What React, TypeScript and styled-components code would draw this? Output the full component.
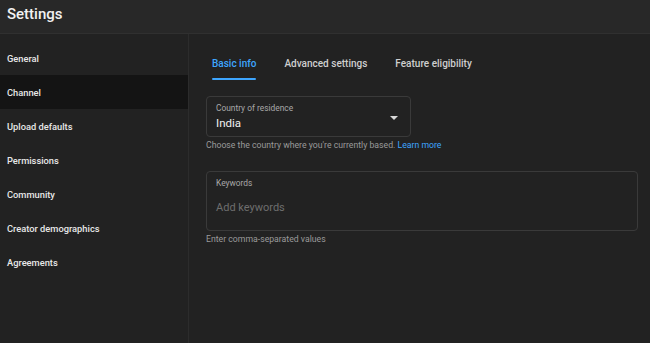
import styled, { createGlobalStyle } from "styled-components";

const GlobalStyle = createGlobalStyle`
  html, body {
    margin: 0;
    padding: 0;
    background: #222222;
  }
  body {
    font-family: Roboto, "Noto Sans", Arial, sans-serif;
    -webkit-font-smoothing: antialiased;
  }
`;

const Page = styled.div`
  width: 650px;
  height: 343px;
  display: flex;
  flex-direction: column;
  background: #222222;
  color: #f1f1f1;
  overflow: hidden;
  box-sizing: border-box;
`;

const Header = styled.div`
  height: 34px;
  flex-shrink: 0;
  display: flex;
  align-items: center;
  padding: 0 7px 6px;
  background: #282828;
  border-bottom: 1px solid #303030;
  font-size: 15px;
  font-weight: 500;
  color: #f1f1f1;
  box-sizing: border-box;
`;

const Body = styled.div`
  flex: 1;
  display: flex;
`;

const Sidebar = styled.nav`
  width: 189px;
  flex-shrink: 0;
  padding-top: 7px;
  border-right: 1px solid #2c2c2c;
  box-sizing: border-box;
`;

const NavItem = styled.div<{ $active?: boolean }>`
  height: 34px;
  display: flex;
  align-items: center;
  padding: 0 7px;
  font-size: 9.3px;
  font-weight: 500;
  color: #e8e8e8;
  background: ${(p) => (p.$active ? "#141414" : "transparent")};
`;

const Main = styled.div`
  flex: 1;
  padding: 14px 12px 0 17px;
`;

const Tabs = styled.div`
  display: flex;
  gap: 28px;
  padding-left: 6px;
  margin-bottom: 17px;
`;

const Tab = styled.div<{ $active?: boolean }>`
  position: relative;
  height: 31px;
  display: flex;
  align-items: center;
  font-size: 10px;
  font-weight: 500;
  color: ${(p) => (p.$active ? "#3ea6ff" : "#cfcfcf")};
  &::after {
    content: "";
    display: ${(p) => (p.$active ? "block" : "none")};
    position: absolute;
    left: 0;
    right: 0;
    bottom: -1px;
    height: 2px;
    background: #3ea6ff;
    border-radius: 1px;
  }
`;

const Field = styled.div<{ $width: string; $height: number }>`
  width: ${(p) => p.$width};
  height: ${(p) => p.$height}px;
  border: 1px solid #3a3a3a;
  border-radius: 4px;
  padding: 6px 9px 0;
  box-sizing: border-box;
  display: flex;
  align-items: flex-start;
  justify-content: space-between;
`;

const FieldText = styled.div`
  display: flex;
  flex-direction: column;
`;

const Label = styled.div`
  font-size: 8.4px;
  color: #a8a8a8;
  line-height: 10px;
`;

const Value = styled.div<{ $placeholder?: boolean }>`
  font-size: ${(p) => (p.$placeholder ? "11px" : "11.5px")};
  line-height: 14px;
  margin-top: ${(p) => (p.$placeholder ? "13px" : "3px")};
  color: ${(p) => (p.$placeholder ? "#6e6e6e" : "#f1f1f1")};
`;

const Arrow = styled.div`
  width: 0;
  height: 0;
  border-left: 4.5px solid transparent;
  border-right: 4.5px solid transparent;
  border-top: 4.5px solid #d8d8d8;
  margin-top: 13px;
  margin-right: 3px;
`;

const Helper = styled.div<{ $gap: number }>`
  font-size: 8.7px;
  color: #9a9a9a;
  margin-top: 3px;
  margin-bottom: ${(p) => p.$gap}px;
  line-height: 11px;
`;

const Link = styled.span`
  color: #3ea6ff;
`;

const navItems = [
  "General",
  "Channel",
  "Upload defaults",
  "Permissions",
  "Community",
  "Creator demographics",
  "Agreements",
];

export default function App() {
  return (
    <>
      <GlobalStyle />
      <Page>
        <Header>Settings</Header>
        <Body>
          <Sidebar>
            {navItems.map((item) => (
              <NavItem key={item} $active={item === "Channel"}>
                {item}
              </NavItem>
            ))}
          </Sidebar>
          <Main>
            <Tabs>
              <Tab $active>Basic info</Tab>
              <Tab>Advanced settings</Tab>
              <Tab>Feature eligibility</Tab>
            </Tabs>
            <Field $width="205px" $height={41}>
              <FieldText>
                <Label>Country of residence</Label>
                <Value>India</Value>
              </FieldText>
              <Arrow />
            </Field>
            <Helper $gap={20}>
              Choose the country where you're currently based.{" "}
              <Link>Learn more</Link>
            </Helper>
            <Field $width="432px" $height={60}>
              <FieldText>
                <Label>Keywords</Label>
                <Value $placeholder>Add keywords</Value>
              </FieldText>
            </Field>
            <Helper $gap={0}>Enter comma-separated values</Helper>
          </Main>
        </Body>
      </Page>
    </>
  );
}
